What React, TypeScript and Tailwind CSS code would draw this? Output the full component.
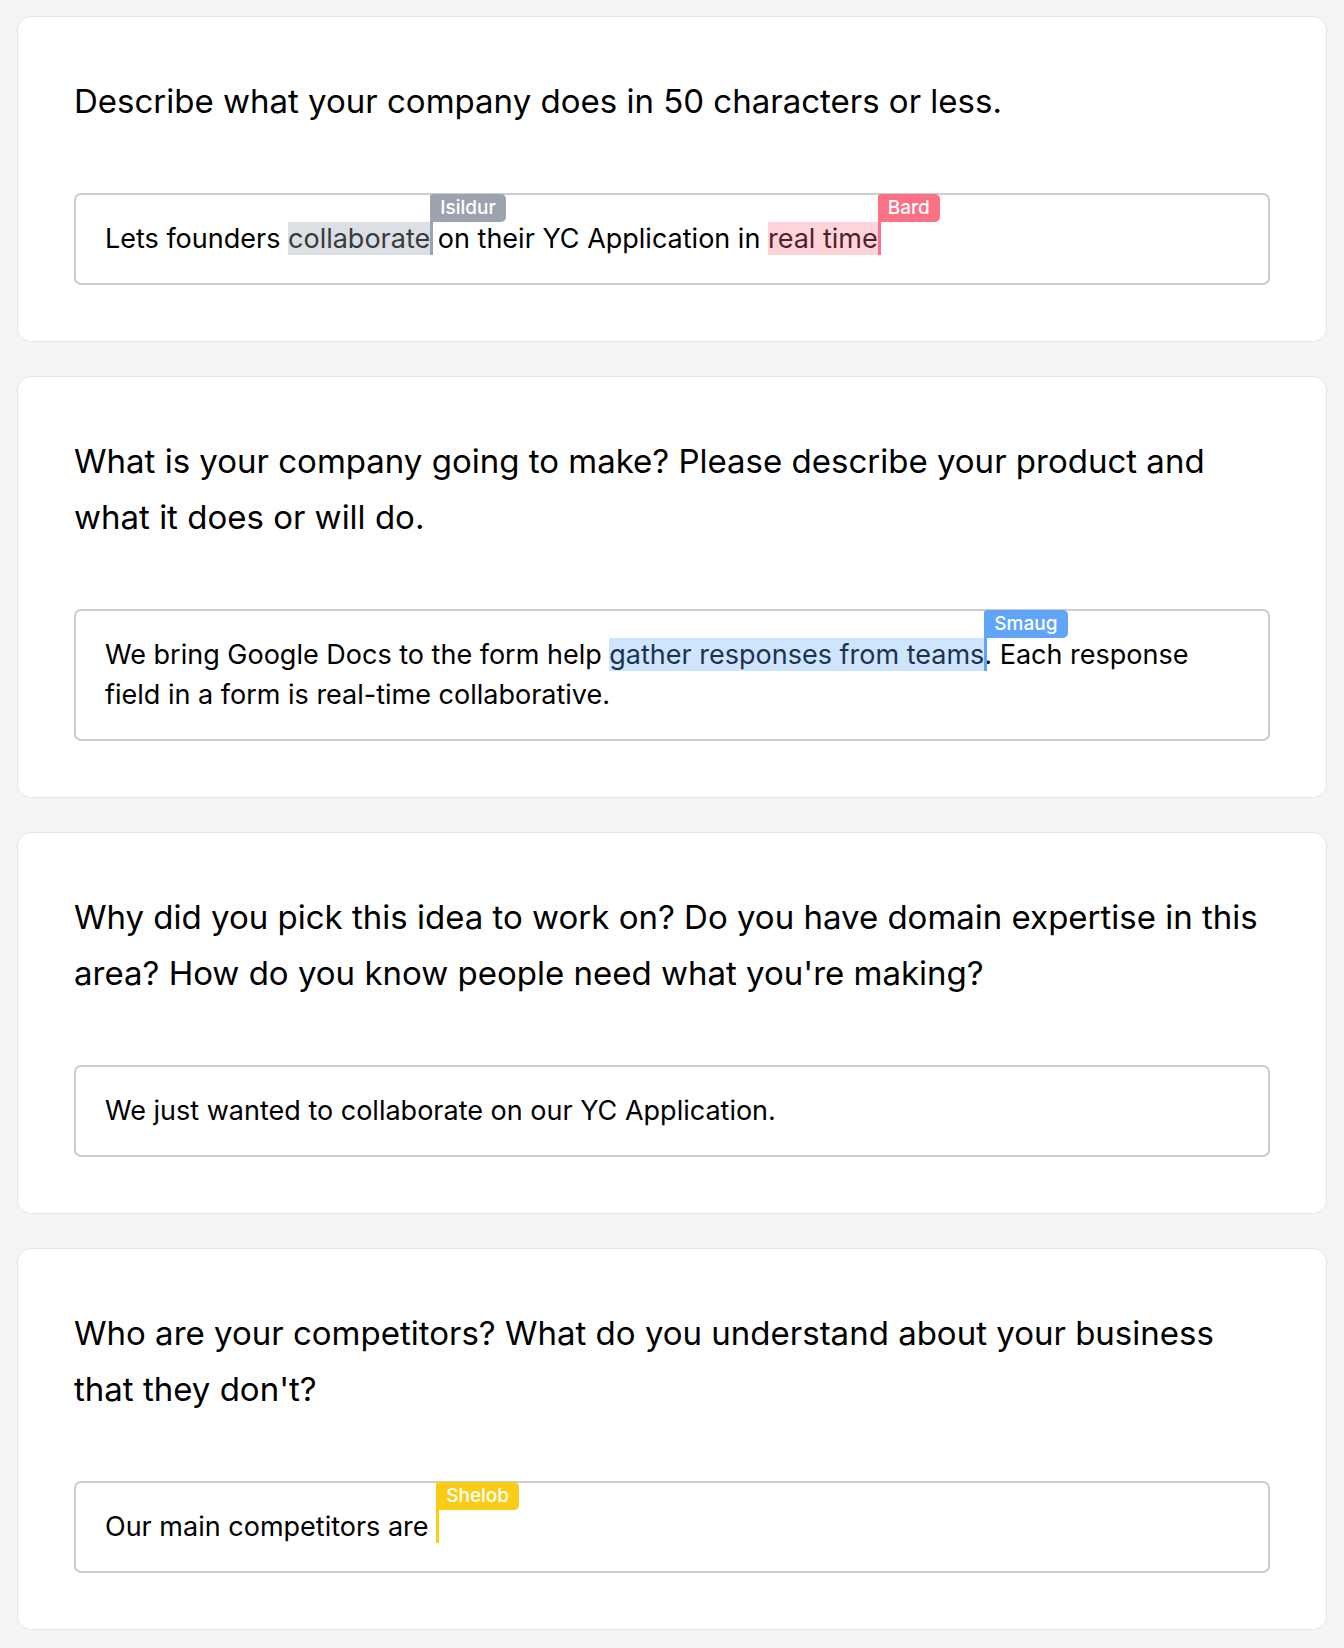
import type { ReactNode } from "react";

type Tone = "gray" | "rose" | "blue" | "yellow";

const tones: Record<Tone, { bar: string; hl: string }> = {
  gray: { bar: "bg-[#9ca3af]", hl: "bg-[#9ca3af]/35" },
  rose: { bar: "bg-[#fb7185]", hl: "bg-[#fb7185]/30" },
  blue: { bar: "bg-[#60a5fa]", hl: "bg-[#60a5fa]/30" },
  yellow: { bar: "bg-[#facc15]", hl: "bg-[#facc15]/30" },
};

function Cursor({ name, tone, children }: { name: string; tone: Tone; children?: ReactNode }) {
  const t = tones[tone];
  return (
    <span className="relative">
      {children ?? "\u200b"}
      {children && <span className={`absolute inset-0 ${t.hl}`} />}
      <span className={`absolute left-full top-0 bottom-0 w-[3px] ${t.bar}`}>
        <span
          className={`absolute bottom-full left-0 whitespace-nowrap rounded-r-[5px] rounded-tl-[3px] px-[10px] text-[19px] font-medium leading-[28px] text-white ${t.bar}`}
        >
          {name}
        </span>
      </span>
    </span>
  );
}

function QuestionCard({ question, children }: { question: string; children: ReactNode }) {
  return (
    <div className="rounded-[14px] border border-[#e5e7eb] bg-white px-14 pb-[56px] pt-14">
      <h2 className="mb-[64px] text-[33px] leading-[56px] text-black">{question}</h2>
      <div className="rounded-[7px] border-2 border-[#cdcdcd] px-[29px] py-[24px] text-[27px] leading-10 text-black">
        {children}
      </div>
    </div>
  );
}

export default function App() {
  return (
    <div
      className="flex min-h-screen flex-col gap-[34px] bg-[#f3f4f6] px-[17px] pb-5 pt-4"
      style={{ fontFamily: "Inter, 'Noto Sans', sans-serif" }}
    >
      <QuestionCard question="Describe what your company does in 50 characters or less.">
        Lets founders <Cursor name="Isildur" tone="gray">collaborate</Cursor> on their YC Application in{" "}
        <Cursor name="Bard" tone="rose">real time</Cursor>
      </QuestionCard>

      <QuestionCard question="What is your company going to make? Please describe your product and what it does or will do.">
        We bring Google Docs to the form help{" "}
        <Cursor name="Smaug" tone="blue">gather responses from teams</Cursor>. Each response field in a form is
        real-time collaborative.
      </QuestionCard>

      <QuestionCard question="Why did you pick this idea to work on? Do you have domain expertise in this area? How do you know people need what you're making?">
        We just wanted to collaborate on our YC Application.
      </QuestionCard>

      <QuestionCard question="Who are your competitors? What do you understand about your business that they don't?">
        Our main competitors are <Cursor name="Shelob" tone="yellow" />
      </QuestionCard>
    </div>
  );
}
